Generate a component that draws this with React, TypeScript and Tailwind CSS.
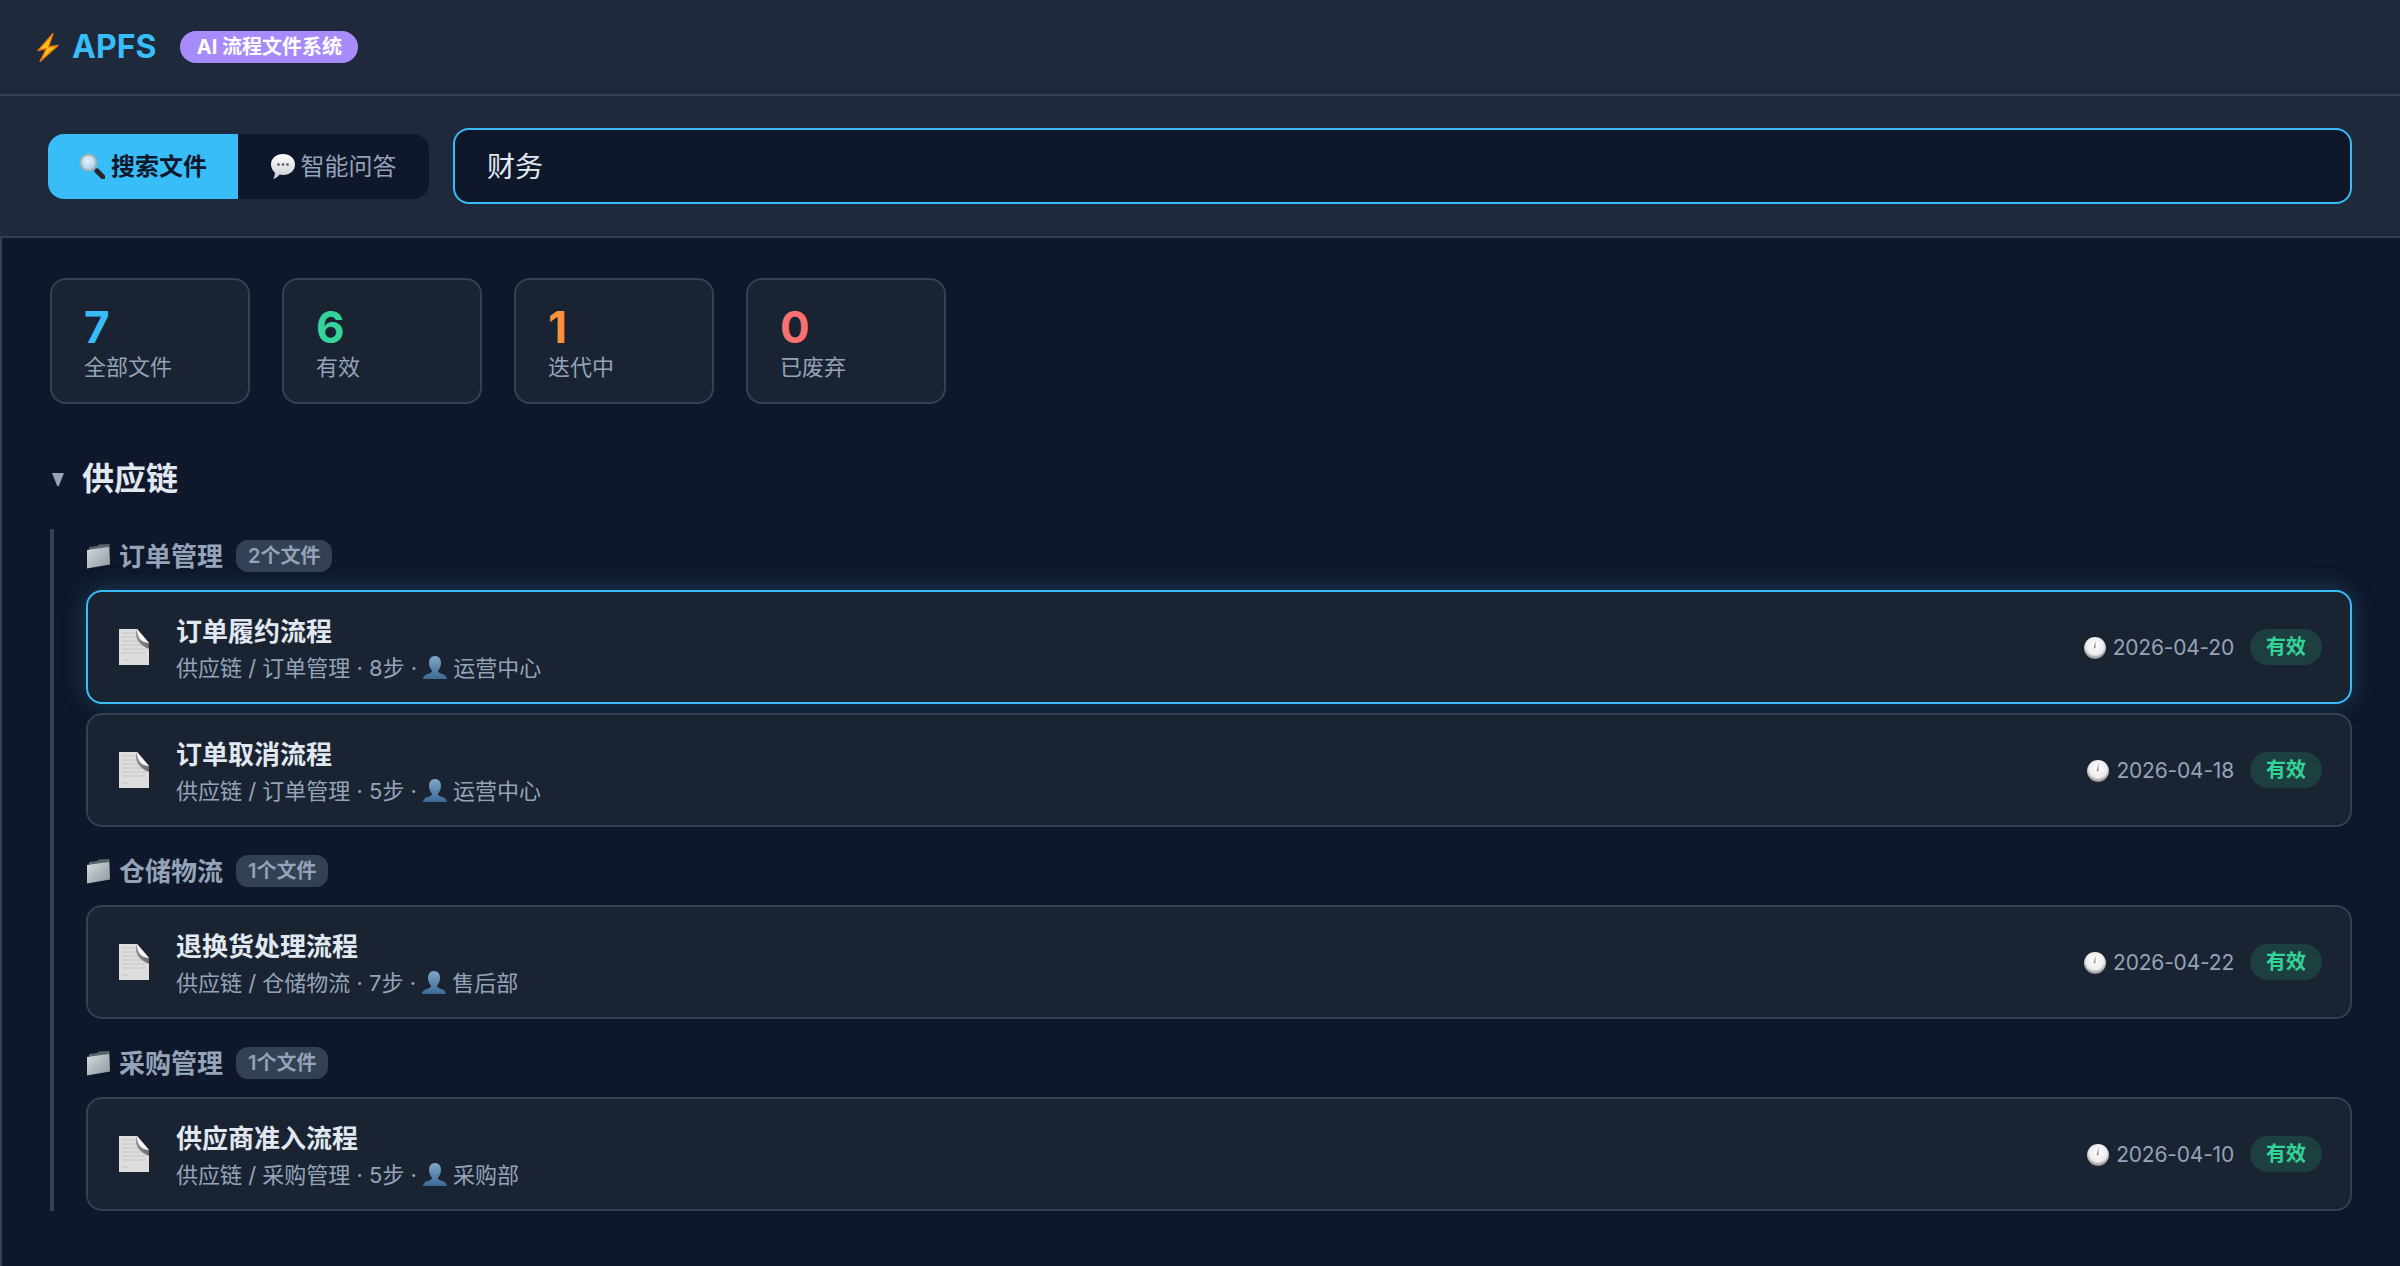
import {FC} from 'react';

const Bolt: FC = () => (
  <svg width="22" height="29" viewBox="0 0 22 29" className="shrink-0">
    <path d="M16 0.500 L1 17.500 L9.500 15.500 L3 28.500 L21 12.500 L11.500 14 Z" fill="#fcc21b" stroke="#e8770c" strokeWidth="1.300" strokeLinejoin="round" />
  </svg>
);

const Glass: FC = () => (
  <svg width="26" height="26" viewBox="0 0 26 26" className="shrink-0">
    <defs>
      <radialGradient id="glass" cx="0.45" cy="0.4" r="0.6">
        <stop offset="0" stopColor="#e2f3fb" />
        <stop offset="1" stopColor="#9fd0ea" />
      </radialGradient>
    </defs>
    <path d="M15 15 L18 18" stroke="#8b9299" strokeWidth="3" />
    <path d="M18 18 L24 24" stroke="#26272b" strokeWidth="5" strokeLinecap="round" />
    <circle cx="9.500" cy="9.500" r="8" fill="url(#glass)" stroke="#a5adb4" strokeWidth="2" />
  </svg>
);

const Bubble: FC = () => (
  <svg width="24" height="27" viewBox="0 0 24 27" className="shrink-0">
    <defs>
      <linearGradient id="bubble" x1="0" y1="0" x2="0" y2="1">
        <stop offset="0" stopColor="#ffffff" />
        <stop offset="1" stopColor="#c9ccd0" />
      </linearGradient>
    </defs>
    <path d="M12 1 C19 1 24 5.500 24 11.500 C24 17.500 19 22 12 22 C10.500 22 9.500 21.800 8.500 21.500 C7 23.500 5 25.500 2 26 C3.500 24 4 22 3.800 19.500 C1.500 17.500 0 14.800 0 11.500 C0 5.500 5 1 12 1 Z" fill="url(#bubble)" />
    <circle cx="7.500" cy="11.500" r="1.300" fill="#4b5563" />
    <circle cx="12" cy="11.500" r="1.300" fill="#4b5563" />
    <circle cx="16.500" cy="11.500" r="1.300" fill="#4b5563" />
  </svg>
);

const Folder: FC = () => (
  <svg width="24" height="25" viewBox="0 0 24 25" className="shrink-0">
    <defs>
      <linearGradient id="folder" x1="0" y1="0" x2="1" y2="1">
        <stop offset="0" stopColor="#d7dbde" />
        <stop offset="1" stopColor="#8d969d" />
      </linearGradient>
    </defs>
    <path d="M3 3 L11 2 L13 0.500 L23.500 0 L24 18 L3 22 Z" fill="#59636b" />
    <path d="M1 6 L23 3 L24 20.500 L1 24.500 Z" fill="url(#folder)" />
  </svg>
);

const Doc: FC = () => (
  <svg width="30" height="36" viewBox="0 0 30 36" className="shrink-0">
    <defs>
      <linearGradient id="fold" x1="0" y1="0" x2="1" y2="1">
        <stop offset="0" stopColor="#8e8e8e" />
        <stop offset="1" stopColor="#565656" />
      </linearGradient>
    </defs>
    <path d="M0 0 L18 0 L30 14 L30 36 L0 36 Z" fill="#dddddd" />
    <path d="M3 4 H15 M3 8 H17 M3 12 H19 M3 16 H27 M3 20 H27 M3 24 H27 M3 31 H9" stroke="#c6c6c6" strokeWidth="1.200" />
    <path d="M17 3 C16 9 20 16 30 20 L30 14 L18 0 Z" fill="url(#fold)" opacity="0.85" />
    <path d="M18 0 L30 14 C23 14 18 9 18 0 Z" fill="#f5f5f5" />
  </svg>
);

const Person: FC = () => (
  <svg width="24" height="24" viewBox="0 0 24 24" className="shrink-0">
    <defs>
      <linearGradient id="person" x1="0" y1="0" x2="0" y2="1">
        <stop offset="0" stopColor="#7fa6c7" />
        <stop offset="1" stopColor="#3b6a94" />
      </linearGradient>
    </defs>
    <path d="M12 0 C16 0 18 3 18 7 C18 10.500 16.500 13 15 14.500 C15 16 16 16.800 18 17.500 C21 18.500 23.500 19.500 24 23 L0 23 C0.500 19.500 3 18.500 6 17.500 C8 16.800 9 16 9 14.500 C7.500 13 6 10.500 6 7 C6 3 8 0 12 0 Z" fill="url(#person)" />
  </svg>
);

const Clock: FC = () => (
  <svg width="22" height="22" viewBox="0 0 22 22" className="shrink-0">
    <defs>
      <radialGradient id="clock" cx="0.5" cy="0.4" r="0.62">
        <stop offset="0" stopColor="#ffffff" />
        <stop offset="0.65" stopColor="#ececec" />
        <stop offset="1" stopColor="#777777" />
      </radialGradient>
    </defs>
    <circle cx="11" cy="11" r="11" fill="url(#clock)" />
    <path d="M11.500 3.500 L11.500 11 L9.500 11.500 Z" fill="#8a8a8a" />
  </svg>
);

const stats = [
  {value: '7', label: '全部文件', color: 'text-[#38bdf8]'},
  {value: '6', label: '有效', color: 'text-[#34d399]'},
  {value: '1', label: '迭代中', color: 'text-[#fb923c]'},
  {value: '0', label: '已废弃', color: 'text-[#f87171]'},
];

const groups = [
  {
    name: '订单管理',
    count: '2个文件',
    files: [
      {title: '订单履约流程', meta: '供应链 / 订单管理 · 8步 · ', owner: '运营中心', date: '2026-04-20', active: true},
      {title: '订单取消流程', meta: '供应链 / 订单管理 · 5步 · ', owner: '运营中心', date: '2026-04-18', active: false},
    ],
  },
  {
    name: '仓储物流',
    count: '1个文件',
    files: [{title: '退换货处理流程', meta: '供应链 / 仓储物流 · 7步 · ', owner: '售后部', date: '2026-04-22', active: false}],
  },
  {
    name: '采购管理',
    count: '1个文件',
    files: [{title: '供应商准入流程', meta: '供应链 / 采购管理 · 5步 · ', owner: '采购部', date: '2026-04-10', active: false}],
  },
];

type FileItem = (typeof groups)[number]['files'][number];

const FileCard: FC<{file: FileItem}> = ({file}) => (
  <div
    className={`flex h-[114px] items-center rounded-2xl border-2 bg-[#1a2332] pr-[28px] pl-[31px] ${
      file.active ? 'border-[#38bdf8] shadow-[0_0_24px_rgba(56,189,248,0.25)]' : 'border-[#334155]'
    }`}>
    <Doc />
    <div className="ml-[27px] flex-1 pt-[3px]">
      <div className="text-[26px] leading-[36px] font-bold text-[#e2e8f0]">{file.title}</div>
      <div className="mt-[2px] flex items-center text-[22px] leading-[32px] whitespace-pre text-[#94a3b8]">
        <span>{file.meta}</span>
        <Person />
        <span className="ml-[6px]">{file.owner}</span>
      </div>
    </div>
    <div className="flex items-center gap-[7px] pt-[1px] text-[21px] tracking-[-0.2px] text-[#94a3b8]">
      <Clock />
      <span>{file.date}</span>
    </div>
    <span className="ml-[16px] flex h-[36px] w-[72px] items-center justify-center rounded-[18px] bg-[#1e3f40] text-[20px] font-semibold text-[#34d399]">
      有效
    </span>
  </div>
);

export default function App() {
  return (
    <div className="min-h-[1266px] bg-[#0f172a] [font-family:Inter,'Noto_Sans_CJK_SC',sans-serif]">
      <header className="flex h-[96px] items-center border-b-2 border-[#334155] bg-[#1e293b] pl-[37px]">
        <Bolt />
        <span className="ml-[13px] text-[32px] font-bold text-[#38bdf8]">APFS</span>
        <span className="ml-[24px] flex h-[32px] w-[178px] items-center justify-center rounded-2xl bg-[#a78bfa] text-[20px] font-bold text-white">
          AI 流程文件系统
        </span>
      </header>

      <div className="flex items-center gap-[24px] border-b-2 border-[#334155] bg-[#1e293b] px-[48px] py-[32px]">
        <div className="flex h-[65px] w-[381px] shrink-0 overflow-hidden rounded-2xl bg-[#0f172a] text-[24px]">
          <div className="flex w-[190px] items-center justify-center gap-[6px] bg-[#38bdf8] font-semibold text-[#0f172a]">
            <Glass />
            <span className="pt-[2px]">搜索文件</span>
          </div>
          <div className="flex flex-1 items-center justify-center gap-[6px] text-[#94a3b8]">
            <Bubble />
            <span className="pt-[2px]">智能问答</span>
          </div>
        </div>
        <div className="flex h-[76px] flex-1 items-center rounded-2xl border-2 border-[#38bdf8] bg-[#0f172a] px-[32px] pt-[2px] text-[28px] text-[#e2e8f0]">
          财务
        </div>
      </div>

      <main className="min-h-[1028px] border-l-2 border-[#334155] pt-[40px] pr-[48px] pl-[48px]">
        <div className="flex gap-[32px]">
          {stats.map(stat => (
            <div
              key={stat.label}
              className="flex h-[126px] w-[200px] flex-col justify-center rounded-2xl border-2 border-[#334155] bg-[#1a2332] pl-[32px]">
              <div className={`pt-[2px] text-[44px] leading-[51px] font-bold ${stat.color}`}>{stat.value}</div>
              <div className="text-[22px] leading-[29px] text-[#94a3b8]">{stat.label}</div>
            </div>
          ))}
        </div>

        <div className="mt-[55px] flex h-[40px] items-center">
          <svg width="14" height="15" viewBox="0 0 14 15" className="ml-[1px] shrink-0">
            <path d="M1 1 H13 L8 13.500 Q7 15 6 13.500 Z" fill="#94a3b8" />
          </svg>
          <h2 className="ml-[17px] text-[32px] font-bold text-[#e2e8f0]">供应链</h2>
        </div>

        <div className="mt-[30px] border-l-4 border-[#334155] pt-[11px] pl-[32px]">
          {groups.map((group, i) => (
            <section key={group.name} className={i > 0 ? 'mt-[28px]' : ''}>
              <div className="flex h-[32px] items-center">
                <Folder />
                <span className="ml-[9px] text-[26px] font-semibold text-[#94a3b8]">{group.name}</span>
                <span className="ml-[13px] flex h-[32px] items-center rounded-xl bg-[#334155] px-[12px] text-[20px] font-semibold text-[#94a3b8]">
                  {group.count}
                </span>
              </div>
              <div className="mt-[18px] flex flex-col gap-[9px]">
                {group.files.map(file => (
                  <FileCard key={file.title} file={file} />
                ))}
              </div>
            </section>
          ))}
        </div>
      </main>
    </div>
  );
}
